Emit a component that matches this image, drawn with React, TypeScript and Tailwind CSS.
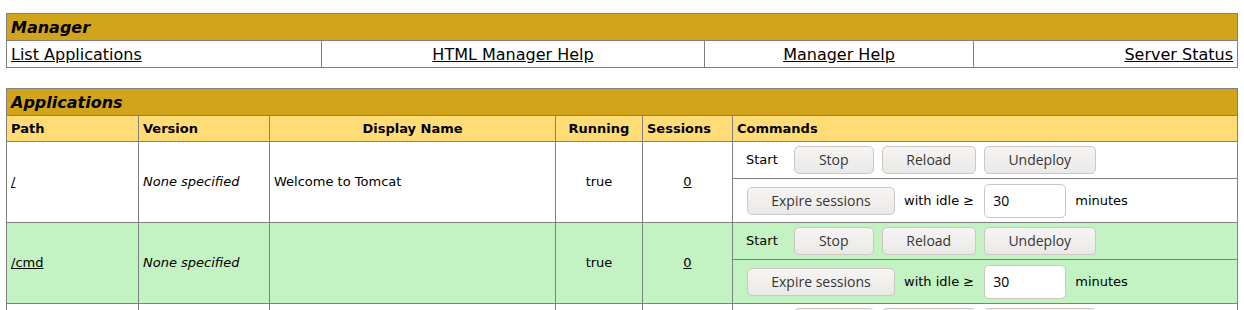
const managerLinks = [
  { label: 'List Applications', align: 'justify-start' },
  { label: 'HTML Manager Help', align: 'justify-center' },
  { label: 'Manager Help', align: 'justify-center' },
  { label: 'Server Status', align: 'justify-end' },
];

const apps = [
  { path: '/', version: 'None specified', display: 'Welcome to Tomcat', bg: 'bg-white' },
  { path: '/cmd', version: 'None specified', display: '', bg: 'bg-[#C3F3C3]' },
  { path: '/docs', version: 'None specified', display: 'Tomcat Documentation', bg: 'bg-white' },
];

function Btn({ children, width }: { children: string; width: string }) {
  return (
    <button
      type="button"
      className={`h-[28px] ${width} rounded-[5px] border border-[#cdc7c2] bg-gradient-to-b from-[#f6f5f4] to-[#ebe9e7] font-['Open_Sans',sans-serif] text-[14px] leading-none text-[#363636]`}
    >
      {children}
    </button>
  );
}

function AppRows({ app }: { app: (typeof apps)[number] }) {
  const cell = `${app.bg} row-span-2 flex items-center px-[4px] text-[13px]`;
  return (
    <>
      <div className={cell}>
        <a href="#" className="text-black underline">
          {app.path}
        </a>
      </div>
      <div className={`${cell} italic`}>{app.version}</div>
      <div className={cell}>{app.display}</div>
      <div className={`${cell} justify-center`}>true</div>
      <div className={`${cell} justify-center`}>
        <a href="#" className="text-black underline">
          0
        </a>
      </div>
      <div className={`${app.bg} flex h-[36px] items-center pl-[13px] text-[13px]`}>
        <span>Start</span>
        <div className="ml-4 flex gap-2">
          <Btn width="w-[80px]">Stop</Btn>
          <Btn width="w-[94px]">Reload</Btn>
          <Btn width="w-[112px]">Undeploy</Btn>
        </div>
      </div>
      <div className={`${app.bg} flex h-[43px] items-center pl-[14px] text-[13px]`}>
        <Btn width="w-[148px]">Expire sessions</Btn>
        <span className="ml-[9px]">with idle ≥</span>
        <input
          readOnly
          value="30"
          className="ml-[10px] h-[34px] w-[82px] rounded-[5px] border border-[#cdc7c2] bg-white pl-2 font-['Open_Sans',sans-serif] text-[14px] text-black outline-none"
        />
        <span className="ml-[9px]">minutes</span>
      </div>
    </>
  );
}

export default function App() {
  return (
    <div className="min-h-[310px] bg-white px-[6px] pt-[13px] font-['DejaVu_Sans',sans-serif] text-black">
      <div className="grid grid-cols-[314px_382px_268px_1fr] gap-px border border-[#808080] bg-[#808080]">
        <div className="col-span-4 flex h-[26px] items-center bg-[#D2A41C] px-[4px] pt-px text-[16px] font-bold italic">
          Manager
        </div>
        {managerLinks.map((link) => (
          <div key={link.label} className={`flex h-[26px] items-center bg-white px-[4px] pt-px text-[16px] ${link.align}`}>
            <a href="#" className="text-black underline">
              {link.label}
            </a>
          </div>
        ))}
      </div>

      <div className="mt-[20px] grid grid-cols-[131px_130px_285px_86px_89px_1fr] gap-px border border-[#808080] bg-[#808080]">
        <div className="col-span-6 flex h-[26px] items-center bg-[#D2A41C] px-[4px] pt-px text-[16px] font-bold italic">
          Applications
        </div>
        <div className="flex h-[25px] items-center bg-[#FFDC75] px-[4px] text-[13px] font-bold">Path</div>
        <div className="flex h-[25px] items-center bg-[#FFDC75] px-[4px] text-[13px] font-bold">Version</div>
        <div className="flex h-[25px] items-center justify-center bg-[#FFDC75] px-[4px] text-[13px] font-bold">
          Display Name
        </div>
        <div className="flex h-[25px] items-center justify-center bg-[#FFDC75] px-[4px] text-[13px] font-bold">
          Running
        </div>
        <div className="flex h-[25px] items-center bg-[#FFDC75] px-[4px] text-[13px] font-bold">Sessions</div>
        <div className="flex h-[25px] items-center bg-[#FFDC75] px-[4px] text-[13px] font-bold">Commands</div>
        {apps.map((app) => (
          <AppRows key={app.path} app={app} />
        ))}
      </div>
    </div>
  );
}
